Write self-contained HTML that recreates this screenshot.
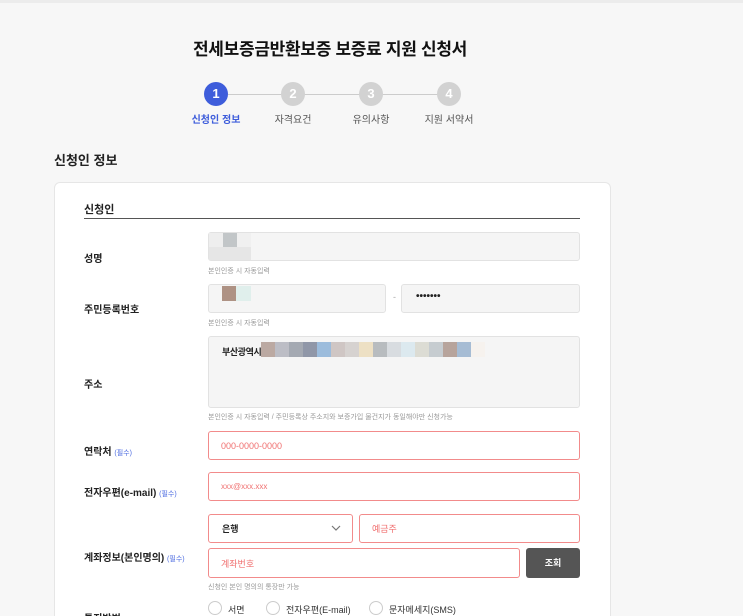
<!DOCTYPE html>
<html><head><meta charset="utf-8"><style>
*{margin:0;padding:0;box-sizing:border-box}
html,body{width:743px;height:616px;overflow:hidden}
body{background:#f7f7f7;font-family:"Liberation Sans","Noto Sans CJK KR",sans-serif;position:relative;color:#222}
.a{position:absolute}
.topline{left:0;top:0;width:743px;height:3px;background:#ececec}
h1{position:absolute;left:0;width:660px;top:35px;text-align:center;font-size:17px;font-weight:700;color:#111;letter-spacing:-0.3px}
.line{top:94px;height:1px;background:#ccc}
.c{width:24px;height:24px;border-radius:50%;background:#d2d2d2;color:#fff;font-size:13px;font-weight:700;text-align:center;line-height:24px;top:82px}
.sl{top:111px;font-size:10px;color:#555;width:80px;text-align:center}
.card{left:54px;top:182px;width:557px;height:450px;background:#fff;border:1px solid #e6e6e6;border-radius:6px}
.lab{font-size:10px;font-weight:700;color:#222}
.req{color:#4c6be0;font-size:7px;font-weight:400}
.in{background:#f5f5f5;border:1px solid #e2e2e2;border-radius:3px}
.rin{background:#fff;border:1px solid #f28b8b;border-radius:3px;font-size:9px;color:#f07070;padding-left:12px;display:flex;align-items:center}
.h{font-size:7px;color:#999}
.rad{width:14px;height:14px;border:1px solid #ccc;border-radius:50%;background:#fff;top:601px}
.rt{top:603px;font-size:9px;color:#333}
</style></head><body>
<div class="a topline"></div>
<h1>전세보증금반환보증 보증료 지원 신청서</h1>
<div class="a line" style="left:228px;width:220px"></div>
<div class="a c" style="left:204px;background:#3e5ddb">1</div>
<div class="a c" style="left:281px">2</div>
<div class="a c" style="left:359px">3</div>
<div class="a c" style="left:437px">4</div>
<div class="a sl" style="left:176px;color:#3e5ddb;font-weight:700">신청인 정보</div>
<div class="a sl" style="left:253px">자격요건</div>
<div class="a sl" style="left:331px">유의사항</div>
<div class="a sl" style="left:409px">지원 서약서</div>
<div class="a" style="left:54px;top:150px;font-size:13px;font-weight:700">신청인 정보</div>
<div class="a card"></div>
<div class="a lab" style="left:84px;top:201px;font-size:11px">신청인</div>
<div class="a" style="left:84px;top:218px;width:496px;height:1px;background:#555"></div>

<div class="a lab" style="left:84px;top:250px">성명</div>
<div class="a in" style="left:208px;top:232px;width:372px;height:29px"></div>
<div class="a" style="left:209px;top:233px;width:14px;height:14px;background:#eee"></div>
<div class="a" style="left:223px;top:233px;width:14px;height:14px;background:#c2c6c8"></div>
<div class="a" style="left:237px;top:233px;width:14px;height:14px;background:#f0f0f0"></div>
<div class="a" style="left:209px;top:247px;width:42px;height:13px;background:#e6e6e6"></div>
<div class="a h" style="left:208px;top:266px">본인인증 시 자동입력</div>

<div class="a lab" style="left:84px;top:301px">주민등록번호</div>
<div class="a in" style="left:208px;top:284px;width:178px;height:29px"></div>
<div class="a" style="left:222px;top:286px;width:14px;height:15px;background:#ae9284"></div>
<div class="a" style="left:236px;top:286px;width:15px;height:15px;background:#e0efec"></div>
<div class="a" style="left:393px;top:292px;font-size:9px;color:#aaa">-</div>
<div class="a in" style="left:401px;top:284px;width:179px;height:29px;font-size:10px;font-weight:700;padding:6px 0 0 14px">•••••••</div>
<div class="a h" style="left:208px;top:318px">본인인증 시 자동입력</div>

<div class="a lab" style="left:84px;top:376px">주소</div>
<div class="a in" style="left:208px;top:336px;width:372px;height:72px"></div>
<div class="a" style="left:222px;top:345px;font-size:9px;font-weight:700;letter-spacing:-0.4px">부산광역시</div>
<div class="a" style="left:261px;top:342px;height:15px;display:flex">
<i style="width:14px;background:#bba9a2"></i><i style="width:14px;background:#bcbdc5"></i><i style="width:14px;background:#a4a9b2"></i><i style="width:14px;background:#9097a8"></i><i style="width:14px;background:#9cbcdc"></i><i style="width:14px;background:#cfc6c4"></i><i style="width:14px;background:#d6d2d0"></i><i style="width:14px;background:#ede0c4"></i><i style="width:14px;background:#b8bcbf"></i><i style="width:14px;background:#d8dce0"></i><i style="width:14px;background:#dce9ef"></i><i style="width:14px;background:#dcdcd4"></i><i style="width:14px;background:#c6ccd0"></i><i style="width:14px;background:#b7a49c"></i><i style="width:14px;background:#a6bcd4"></i><i style="width:14px;background:#f6f2ee"></i></div>
<div class="a h" style="left:208px;top:412px">본인인증 시 자동입력 / 주민등록상 주소지와 보증가입 물건지가 동일해야만 신청가능</div>

<div class="a lab" style="left:84px;top:443px">연락처 <span class="req">(필수)</span></div>
<div class="a rin" style="left:208px;top:431px;width:372px;height:29px">000-0000-0000</div>

<div class="a lab" style="left:84px;top:484px">전자우편(e-mail) <span class="req">(필수)</span></div>
<div class="a rin" style="left:208px;top:472px;width:372px;height:29px;font-size:8px">xxx@xxx.xxx</div>

<div class="a rin" style="left:208px;top:514px;width:145px;height:29px;color:#222;font-weight:700;padding-left:13px">은행</div>
<svg class="a" style="left:331px;top:524px" width="10" height="8"><path d="M1 2l4 4 4-4" fill="none" stroke="#777" stroke-width="1.2"/></svg>
<div class="a rin" style="left:359px;top:514px;width:221px;height:29px">예금주</div>
<div class="a lab" style="left:84px;top:549px">계좌정보(본인명의) <span class="req">(필수)</span></div>
<div class="a rin" style="left:208px;top:548px;width:312px;height:30px">계좌번호</div>
<div class="a" style="left:526px;top:548px;width:54px;height:30px;background:#555;border-radius:3px;color:#fff;font-size:9px;font-weight:700;text-align:center;line-height:30px">조회</div>
<div class="a h" style="left:208px;top:582px">신청인 본인 명의의 통장만 가능</div>

<div class="a lab" style="left:84px;top:610px">통지방법 <span class="req">(필수)</span></div>
<div class="a rad" style="left:208px"></div><div class="a rt" style="left:228px">서면</div>
<div class="a rad" style="left:266px"></div><div class="a rt" style="left:286px">전자우편(E-mail)</div>
<div class="a rad" style="left:369px"></div><div class="a rt" style="left:389px">문자메세지(SMS)</div>
</body></html>
